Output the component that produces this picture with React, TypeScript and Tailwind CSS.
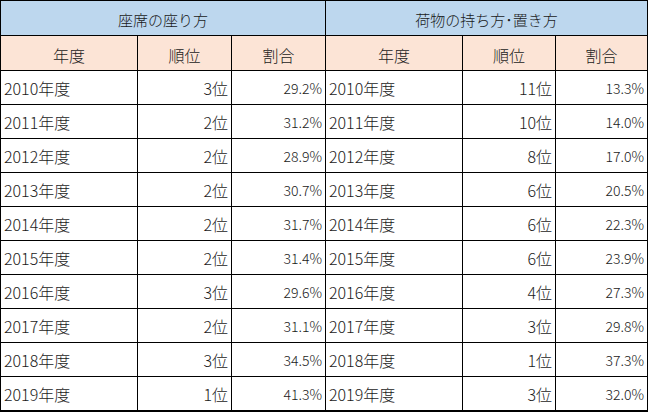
import React from 'react';

const seats = [
  ['2010年度', '3位', '29.2%'],
  ['2011年度', '2位', '31.2%'],
  ['2012年度', '2位', '28.9%'],
  ['2013年度', '2位', '30.7%'],
  ['2014年度', '2位', '31.7%'],
  ['2015年度', '2位', '31.4%'],
  ['2016年度', '3位', '29.6%'],
  ['2017年度', '2位', '31.1%'],
  ['2018年度', '3位', '34.5%'],
  ['2019年度', '1位', '41.3%'],
];

const baggage = [
  ['2010年度', '11位', '13.3%'],
  ['2011年度', '10位', '14.0%'],
  ['2012年度', '8位', '17.0%'],
  ['2013年度', '6位', '20.5%'],
  ['2014年度', '6位', '22.3%'],
  ['2015年度', '6位', '23.9%'],
  ['2016年度', '4位', '27.3%'],
  ['2017年度', '3位', '29.8%'],
  ['2018年度', '1位', '37.3%'],
  ['2019年度', '3位', '32.0%'],
];

export default function App() {
  return (
    <div
      className="w-[650px] h-[413px] bg-white text-[#1a1a1a]"
      style={{ fontFamily: '"Noto Sans CJK JP", "Noto Sans", sans-serif' }}
    >
      <div className="inline-grid grid-cols-[136px_93px_93px_136px_92px_91px] grid-rows-[34px_34px_repeat(10,33px)] gap-px bg-black p-px pb-[2px] text-[16px] leading-none font-light">
        <div className="col-span-3 flex items-center justify-center bg-[#bdd7ee] pt-[3px] text-[15px]">
          座席の座り方
        </div>
        <div className="col-span-3 flex items-center justify-center bg-[#bdd7ee] pt-[3px] text-[15px]">
          荷物の持ち方･置き方
        </div>

        {['年度', '順位', '割合', '年度', '順位', '割合'].map((h, i) => (
          <div
            key={i}
            className="flex items-center justify-center bg-[#fce4d6] pt-[3px]"
          >
            {h}
          </div>
        ))}

        {seats.map((row, i) => (
          <React.Fragment key={i}>
            <div className="flex items-center bg-white pl-[3px] pt-px">{row[0]}</div>
            <div className="flex items-center justify-end bg-white pr-[3px] pt-px">
              {row[1]}
            </div>
            <div className="flex items-center justify-end bg-white pr-[3px] pt-px text-[14px]">
              {row[2]}
            </div>
            <div className="flex items-center bg-white pl-[3px] pt-px">
              {baggage[i][0]}
            </div>
            <div className="flex items-center justify-end bg-white pr-[3px] pt-px">
              {baggage[i][1]}
            </div>
            <div className="flex items-center justify-end bg-white pr-[3px] pt-px text-[14px]">
              {baggage[i][2]}
            </div>
          </React.Fragment>
        ))}
      </div>
    </div>
  );
}
